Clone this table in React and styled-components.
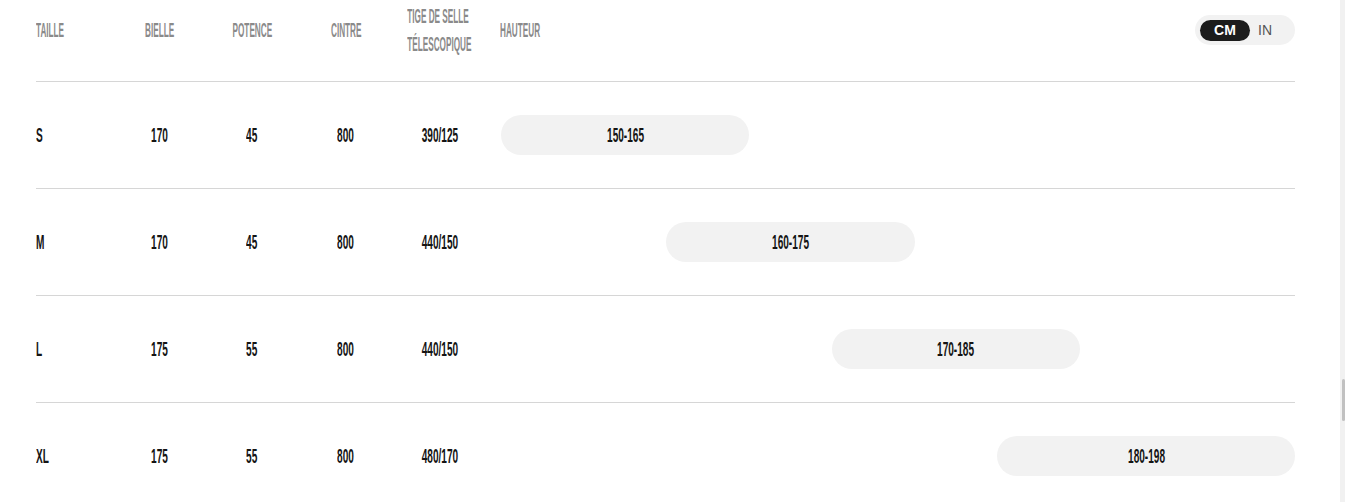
import React from 'react';
import styled, { createGlobalStyle, css } from 'styled-components';

const GlobalStyle = createGlobalStyle`
  html, body {
    margin: 0;
    padding: 0;
    background: #fff;
  }
  body {
    font-family: "Liberation Sans", Arial, sans-serif;
    color: #111;
  }
  * {
    box-sizing: border-box;
  }
`;

const RANGE_MIN = 150;
const RANGE_MAX = 198;

const sizes = [
  { size: 'S', bielle: 170, potence: 45, cintre: 800, tige: '390/125', min: 150, max: 165 },
  { size: 'M', bielle: 170, potence: 45, cintre: 800, tige: '440/150', min: 160, max: 175 },
  { size: 'L', bielle: 175, potence: 55, cintre: 800, tige: '440/150', min: 170, max: 185 },
  { size: 'XL', bielle: 175, potence: 55, cintre: 800, tige: '480/170', min: 180, max: 198 },
];

const Page = styled.div`
  display: flex;
  height: 100vh;
  overflow: hidden;
`;

const Main = styled.main`
  flex: 1;
  padding: 0 45px 0 36px;
`;

const ScrollRail = styled.div`
  width: 5px;
  background: #f1f1f1;
  padding-top: 379px;
  padding-left: 2px;
`;

const ScrollThumb = styled.div`
  width: 3px;
  height: 42px;
  background: #c1c1c1;
  border-radius: 2px;
`;

const columns = css`
  display: grid;
  grid-template-columns: 84px 80px 104px 84px 103px 1fr;
  align-items: center;
  border-bottom: 1px solid #d6d6d6;
`;

const HeaderRow = styled.div`
  ${columns};
  height: 82px;
  padding-bottom: 21px;
  color: #8a8a8a;
`;

const Row = styled.div`
  ${columns};
  height: 107px;
  color: #141414;
`;

const Cell = styled.div`
  display: flex;
  justify-content: ${p => (p.$align === 'left' ? 'flex-start' : 'center')};
  align-items: center;
  min-width: 0;
`;

// condensed look: Liberation Sans squeezed horizontally
const Cond = styled.span`
  display: inline-block;
  flex-shrink: 0;
  white-space: nowrap;
  font-size: ${p => p.$size || 21}px;
  font-weight: 700;
  line-height: 28px;
  text-align: left;
  transform: scaleX(${p => p.$scale || 0.48});
  transform-origin: ${p => (p.$align === 'left' ? 'left center' : 'center')};
`;

const HeadLast = styled.div`
  display: flex;
  align-items: center;
  justify-content: space-between;
  padding-left: 9px;
`;

const Toggle = styled.div`
  display: flex;
  align-items: center;
  width: 100px;
  height: 30px;
  padding: 0 5px;
  border-radius: 15px;
  background: #f2f2f2;
`;

const UnitButton = styled.button`
  border: none;
  height: 21px;
  padding: ${p => (p.$active ? '0' : '0 0 0 8px')};
  width: ${p => (p.$active ? '50px' : 'auto')};
  border-radius: 11px;
  background: ${p => (p.$active ? '#1c1c1c' : 'transparent')};
  color: ${p => (p.$active ? '#fff' : '#555')};
  font-family: "Liberation Sans", Arial, sans-serif;
  font-size: 14px;
  font-weight: ${p => (p.$active ? 700 : 400)};
  line-height: 21px;
  cursor: pointer;
`;

const Track = styled.div`
  padding-left: 10px;
`;

const HeightPill = styled.div`
  display: flex;
  justify-content: center;
  align-items: center;
  height: 40px;
  border-radius: 20px;
  background: #f2f2f2;
`;

const HeadLabel = props => <Cond $size={20} $scale={0.41} {...props} />;

const App = () => {
  const span = RANGE_MAX - RANGE_MIN;

  return (
    <Page>
      <GlobalStyle />
      <Main>
        <HeaderRow>
          <Cell $align="left"><HeadLabel $align="left">TAILLE</HeadLabel></Cell>
          <Cell><HeadLabel>BIELLE</HeadLabel></Cell>
          <Cell><HeadLabel>POTENCE</HeadLabel></Cell>
          <Cell><HeadLabel>CINTRE</HeadLabel></Cell>
          <Cell><HeadLabel>TIGE DE SELLE<br />TÉLESCOPIQUE</HeadLabel></Cell>
          <HeadLast>
            <HeadLabel $align="left">HAUTEUR</HeadLabel>
            <Toggle>
              <UnitButton $active>CM</UnitButton>
              <UnitButton>IN</UnitButton>
            </Toggle>
          </HeadLast>
        </HeaderRow>

        {sizes.map(s => (
          <Row key={s.size}>
            <Cell $align="left"><Cond $align="left">{s.size}</Cond></Cell>
            <Cell><Cond>{s.bielle}</Cond></Cell>
            <Cell><Cond>{s.potence}</Cond></Cell>
            <Cell><Cond>{s.cintre}</Cond></Cell>
            <Cell><Cond>{s.tige}</Cond></Cell>
            <Track>
              <HeightPill
                style={{
                  marginLeft: `${((s.min - RANGE_MIN) / span) * 100}%`,
                  width: `${((s.max - s.min) / span) * 100}%`,
                }}
              >
                <Cond>{s.min}-{s.max}</Cond>
              </HeightPill>
            </Track>
          </Row>
        ))}
      </Main>
      <ScrollRail>
        <ScrollThumb />
      </ScrollRail>
    </Page>
  );
};

export default App;
